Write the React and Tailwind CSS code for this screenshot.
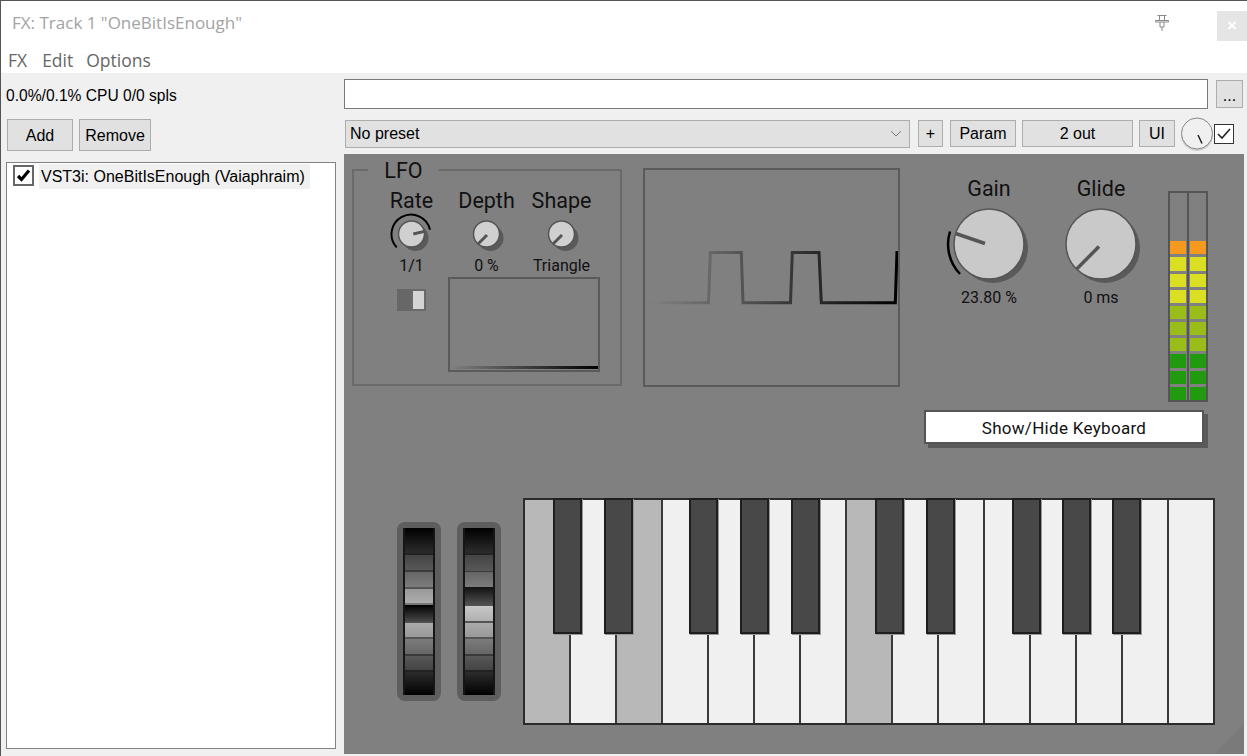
const whiteKeys = [
  "w-[46px] bg-[#b8b8b8] border-r-2",
  "w-[46px] bg-[#f0f0f0] border-r-2",
  "w-[46px] bg-[#b8b8b8] border-r-2",
  "w-[46px] bg-[#f0f0f0] border-r-2",
  "w-[46px] bg-[#f0f0f0] border-r-2",
  "w-[46px] bg-[#f0f0f0] border-r-2",
  "w-[46px] bg-[#f0f0f0] border-r-2",
  "w-[46px] bg-[#b8b8b8] border-r-2",
  "w-[46px] bg-[#f0f0f0] border-r-2",
  "w-[46px] bg-[#f0f0f0] border-r-2",
  "w-[46px] bg-[#f0f0f0] border-r-2",
  "w-[46px] bg-[#f0f0f0] border-r-2",
  "w-[46px] bg-[#f0f0f0] border-r-2",
  "w-[46px] bg-[#f0f0f0] border-r-2",
  "w-[44px] bg-[#f0f0f0]",
]

const blackKeys = [
  "left-[28px]", "left-[79px]", "left-[164px]", "left-[215px]", "left-[266px]",
  "left-[350px]", "left-[401px]", "left-[487px]", "left-[537px]", "left-[587px]",
]

const meterCells = [
  "bg-[#f69a1f]", "bg-[#dadf23]", "bg-[#dadf23]", "bg-[#dadf23]", "bg-[#9bbd1a]",
  "bg-[#9bbd1a]", "bg-[#9bbd1a]", "bg-[#229a10]", "bg-[#229a10]", "bg-[#229a10]",
]

const wheelOne = [
  "h-[25px] bg-[linear-gradient(#000,#2c2c2c)]",
  "h-[2px] bg-[#222]",
  "h-[15px] bg-[linear-gradient(#444,#585858)]",
  "h-[2px] bg-[#3a3a3a]",
  "h-[15px] bg-[linear-gradient(#666,#7c7c7c)]",
  "h-[2px] bg-[#555]",
  "h-[14px] bg-[linear-gradient(#999,#adadad)]",
  "h-[2px] bg-[#777]",
  "h-[17px] bg-[linear-gradient(#000,#4a4a4a)]",
  "h-[1px] bg-[#555]",
  "h-[14px] bg-[linear-gradient(#aaa,#999)]",
  "h-[2px] bg-[#555]",
  "h-[15px] bg-[linear-gradient(#7c7c7c,#666)]",
  "h-[2px] bg-[#3a3a3a]",
  "h-[14px] bg-[linear-gradient(#585858,#444)]",
  "h-[2px] bg-[#222]",
  "h-[23px] bg-[linear-gradient(#2c2c2c,#000)]",
]

const wheelTwo = [
  "h-[25px] bg-[linear-gradient(#000,#2c2c2c)]",
  "h-[2px] bg-[#222]",
  "h-[16px] bg-[linear-gradient(#444,#585858)]",
  "h-[1px] bg-[#3a3a3a]",
  "h-[15px] bg-[linear-gradient(#666,#7c7c7c)]",
  "h-[19px] bg-[linear-gradient(#111,#555)]",
  "h-[15px] bg-[linear-gradient(#c8c8c8,#b0b0b0)]",
  "h-[2px] bg-[#555]",
  "h-[14px] bg-[linear-gradient(#aaa,#999)]",
  "h-[2px] bg-[#555]",
  "h-[15px] bg-[linear-gradient(#7c7c7c,#666)]",
  "h-[2px] bg-[#3a3a3a]",
  "h-[14px] bg-[linear-gradient(#585858,#444)]",
  "h-[2px] bg-[#222]",
  "h-[23px] bg-[linear-gradient(#2c2c2c,#000)]",
]

function Btn({ className, children }) {
  return (
    <div className={"flex items-center justify-center bg-[#e1e1e1] border border-[#adadad] text-[16px] text-black " + className}>
      {children}
    </div>
  )
}

function Wheel({ bands }) {
  return (
    <div className="w-[44px] h-[179px] p-[6px] rounded-[8px] bg-[#5e5e5e]">
      <div className="h-[167px] border-x-2 border-[#161616] bg-black overflow-hidden">
        {bands.map((b, i) => <div key={i} className={b} />)}
      </div>
    </div>
  )
}

/* small lfo knob, 75 wide */
function SmallKnob({ x2, y2, x1, y1, arc }) {
  return (
    <svg width="75" height="44" className="block">
      {arc && <path d="M22.7 35.4 A19.5 19.5 0 1 1 56 17.7" fill="none" stroke="#000" strokeWidth="2" />}
      <circle cx="41.5" cy="26" r="13" fill="#5a5a5a" />
      <circle cx="37.5" cy="22" r="13" fill="#d0d0d0" stroke="#555" strokeWidth="1.5" />
      <line x1={x1} y1={y1} x2={x2} y2={y2} stroke="#555" strokeWidth="3" />
    </svg>
  )
}

function LfoCol({ label, value, knob }) {
  return (
    <div className="w-[75px] flex flex-col items-center">
      <div className="h-[23px] leading-[24px] text-[21.5px] text-[#111]">{label}</div>
      {knob}
      <div className="mt-[1px] h-[18px] leading-[18px] text-[16px] text-[#111]">{value}</div>
    </div>
  )
}

function BigCol({ label, value, children }) {
  return (
    <div className="w-[112px] flex flex-col items-center">
      <div className="mt-[6px] h-[30px] leading-[30px] text-[21.5px] text-[#111]">{label}</div>
      <svg width="112" height="80" className="block">
        <circle cx="60" cy="44" r="35" fill="#5a5a5a" />
        <circle cx="56" cy="40" r="35" fill="#c9c9c9" stroke="#555" strokeWidth="1.5" />
        {children}
      </svg>
      <div className="mt-[4px] h-[20px] leading-[20px] text-[16px] text-[#111]">{value}</div>
    </div>
  )
}

export default function App() {
  return (
    <div className="w-[1247px] h-[756px] flex flex-col overflow-hidden bg-white border-t border-l border-[#555] font-['Liberation_Sans',sans-serif]">
      {/* title bar */}
      <div className="h-[43px] flex items-start">
        <div className="w-[300px] ml-[11px] mt-[10px] whitespace-nowrap text-[17px] leading-[24px] text-[#a3a3a3] font-['Open_Sans',sans-serif]">FX: Track 1 "OneBitIsEnough"</div>
        <svg width="16" height="18" viewBox="0 0 16 18" className="ml-[842px] mt-[13px]" fill="none" stroke="#8a8a8a" strokeWidth="1">
          <path d="M3.5 1.5h9M5.5 1.5v5M10.5 1.5v5M1.5 6.5h13v1.5h-13zM6 8v5h4V8M8 13v4" />
        </svg>
        <div className="ml-[47px] mt-[10px] w-[30px] h-[30px] bg-[#e5e5e5] flex items-center justify-center text-white text-[17px] font-bold">×</div>
      </div>

      {/* menu */}
      <div className="h-[29px] flex items-center pl-[7px] pt-[3px] gap-[13px] text-[17.5px] text-[#666] font-['Open_Sans',sans-serif]">
        <span className="mr-[2px]">FX</span>
        <span>Edit</span>
        <span>Options</span>
      </div>

      <div className="flex-1 flex bg-[#f0f0f0]">
        {/* left col */}
        <div className="w-[343px] pl-[5px]">
          <div className="h-[44px] flex items-center text-[15.6px] text-black pt-[1px]">0.0%/0.1% CPU 0/0 spls</div>
          <div className="mt-[2px] flex gap-[6px] pl-[1px]">
            <Btn className="w-[66px] h-[32px] pt-[1px]">Add</Btn>
            <Btn className="w-[72px] h-[32px] pt-[1px]">Remove</Btn>
          </div>
          <div className="mt-[11px] w-[330px] h-[587px] bg-white border border-[#828282] pl-[6px] pt-[1px]">
            <div className="flex items-start">
              <div className="mt-[1px] w-[21px] h-[21px] border-2 border-[#666] bg-white flex items-center justify-center">
                <svg width="15" height="15" viewBox="0 0 15 15"><path d="M2 8l3.5 3.5L13 2.5" fill="none" stroke="#000" strokeWidth="3.2" /></svg>
              </div>
              <div className="ml-[5px] w-[271px] h-[25px] bg-[#f0f0f0] pl-[2px] flex items-center whitespace-nowrap text-[16px] text-black">VST3i: OneBitIsEnough (Vaiaphraim)</div>
            </div>
          </div>
        </div>

        {/* right col */}
        <div className="w-[900px]">
          <div className="mt-[6px] flex items-center">
            <div className="w-[864px] h-[30px] bg-white border border-[#7a7a7a]" />
            <Btn className="ml-[8px] w-[27px] h-[28px] text-[14px] pt-[4px]">...</Btn>
          </div>
          <div className="mt-[8px] h-[33px] flex items-center text-[16px]">
            <div className="ml-[1px] w-[565px] h-[28px] bg-[#e1e1e1] border border-[#adadad] flex items-center justify-between pl-[4px] pr-[7px] text-black">
              <span>No preset</span>
              <svg width="12" height="7" viewBox="0 0 12 7"><path d="M1 1l5 5 5-5" fill="none" stroke="#777" strokeWidth="1" /></svg>
            </div>
            <Btn className="ml-[8px] w-[25px] h-[27px]">+</Btn>
            <Btn className="ml-[7px] w-[66px] h-[27px]">Param</Btn>
            <Btn className="ml-[6px] w-[111px] h-[27px]">2 out</Btn>
            <Btn className="ml-[6px] w-[36px] h-[27px]">UI</Btn>
            <svg width="34" height="34" viewBox="0 0 34 34" className="ml-[5px]">
              <circle cx="17" cy="18" r="16" fill="#cfcfcf" />
              <circle cx="17" cy="16.5" r="15.5" fill="#f0f0f0" stroke="#888" strokeWidth="1" />
              <line x1="18" y1="18" x2="22" y2="26.5" stroke="#222" strokeWidth="1.5" />
            </svg>
            <div className="w-[20px] h-[20px] bg-white border border-[#333] flex items-center justify-center">
              <svg width="16" height="14" viewBox="0 0 16 14"><path d="M2 7l4 4 8-9" fill="none" stroke="#222" strokeWidth="1.6" /></svg>
            </div>
          </div>

          {/* plugin */}
          <div className="relative mt-[4px] w-[900px] h-[600px] bg-[#808080] font-['Roboto',sans-serif]">
            <div className="pt-[14px] pl-[8px] flex items-start">
              {/* lfo */}
              <div className="relative mt-[1px] w-[270px] h-[217px] border-2 border-[#6a6a6a]">
                <div className="absolute left-[14px] top-[-12px] w-[71px] h-[24px] bg-[#808080] text-center leading-[24px] text-[21.5px] text-[#111]">LFO</div>
                <div className="mt-[18px] ml-[20px] flex">
                  <LfoCol label="Rate" value="1/1" knob={<SmallKnob arc x1="39.3" y1="22" x2="50.3" y2="19.4" />} />
                  <LfoCol label="Depth" value="0 %" knob={<SmallKnob x1="38" y1="23" x2="29" y2="32" />} />
                  <LfoCol label="Shape" value="Triangle" knob={<SmallKnob x1="38" y1="23" x2="29" y2="32" />} />
                </div>
                <div className="mt-[2px] ml-[43px] flex items-start">
                  <div className="mt-[12px] w-[29px] h-[22px] bg-[#676767] flex justify-end">
                    <div className="w-[15px] h-[22px] bg-[#d4d4d4] border-2 border-[#6a6a6a]" />
                  </div>
                  <div className="ml-[22px] w-[152px] h-[95px] border-2 border-[#5a5a5a] flex flex-col justify-end">
                    <div className="mb-[1px] h-[3px] bg-[linear-gradient(to_right,transparent,#000)]" />
                  </div>
                </div>
              </div>

              {/* scope */}
              <div className="ml-[21px] w-[257px] h-[219px] border-2 border-[#5a5a5a] box-border">
                <svg viewBox="645 170 253 215" width="253" height="215" className="block">
                  <defs>
                    <linearGradient id="wave" gradientUnits="userSpaceOnUse" x1="650" y1="0" x2="897" y2="0">
                      <stop offset="0" stopColor="#666" stopOpacity="0" />
                      <stop offset="0.25" stopColor="#666" />
                      <stop offset="0.6" stopColor="#333" />
                      <stop offset="1" stopColor="#000" />
                    </linearGradient>
                  </defs>
                  <path d="M650 302.7H708.5L710.3 252.5H741.3L743 302.7H790.5L792.3 252.5H819L821.3 302.7H895.3L897 251" fill="none" stroke="url(#wave)" strokeWidth="3" />
                </svg>
              </div>

              {/* gain, glide, meter, keyboard button */}
              <div className="ml-[24px] w-[290px]">
                <div className="flex items-start">
                  <div className="ml-[9px] flex">
                    <BigCol label="Gain" value="23.80 %">
                      <path d="M17 27.5 A43 43 0 0 0 27 70" fill="none" stroke="#000" strokeWidth="2.5" />
                      <line x1="52" y1="39.5" x2="22.7" y2="29.5" stroke="#555" strokeWidth="3.5" />
                    </BigCol>
                    <BigCol label="Glide" value="0 ms">
                      <line x1="54" y1="42.5" x2="31.7" y2="65" stroke="#555" strokeWidth="3.5" />
                    </BigCol>
                  </div>
                  <div className="ml-[11px] mt-[23px] w-[40px] h-[211px] border-2 border-[#555] flex justify-between relative">
                    <div className="absolute left-[17px] top-0 w-[2px] h-full bg-[#555]" />
                    {[0, 1].map((col) => (
                      <div key={col} className="w-[16px] h-full flex flex-col justify-end gap-[3px]">
                        {meterCells.map((c, i) => <div key={i} className={"h-[13.2px] " + c} />)}
                      </div>
                    ))}
                  </div>
                </div>
                <div className="mt-[8px] w-[280px] h-[34px] pt-[4px] bg-white border-2 border-[#555] shadow-[4px_4px_0_#5a5a5a] flex items-center justify-center text-[17px] tracking-[0.3px] text-[#111]">Show/Hide Keyboard</div>
              </div>
            </div>

            {/* wheels + keys */}
            <div className="mt-[54px] pl-[53px] flex items-start">
              <div className="mt-[24px]"><Wheel bands={wheelOne} /></div>
              <div className="mt-[24px] ml-[16px]"><Wheel bands={wheelTwo} /></div>
              <div className="relative ml-[22px] w-[692px] h-[227px] border-2 border-[#2b2b2b] flex">
                {whiteKeys.map((k, i) => <div key={i} className={"h-full border-[#3a3a3a] " + k} />)}
                {blackKeys.map((k, i) => (
                  <div key={i} className={"absolute top-[-2px] w-[29px] h-[136px] bg-[#484848] border-2 border-[#1e1e1e] shadow-[1px_1px_0_#999] " + k} />
                ))}
              </div>
            </div>

            {/* resize grip */}
            <svg width="30" height="30" className="absolute right-0 bottom-0">
              <path d="M30 0V30H0z" fill="#7a7a7a" />
            </svg>
          </div>
        </div>
      </div>
    </div>
  )
}
